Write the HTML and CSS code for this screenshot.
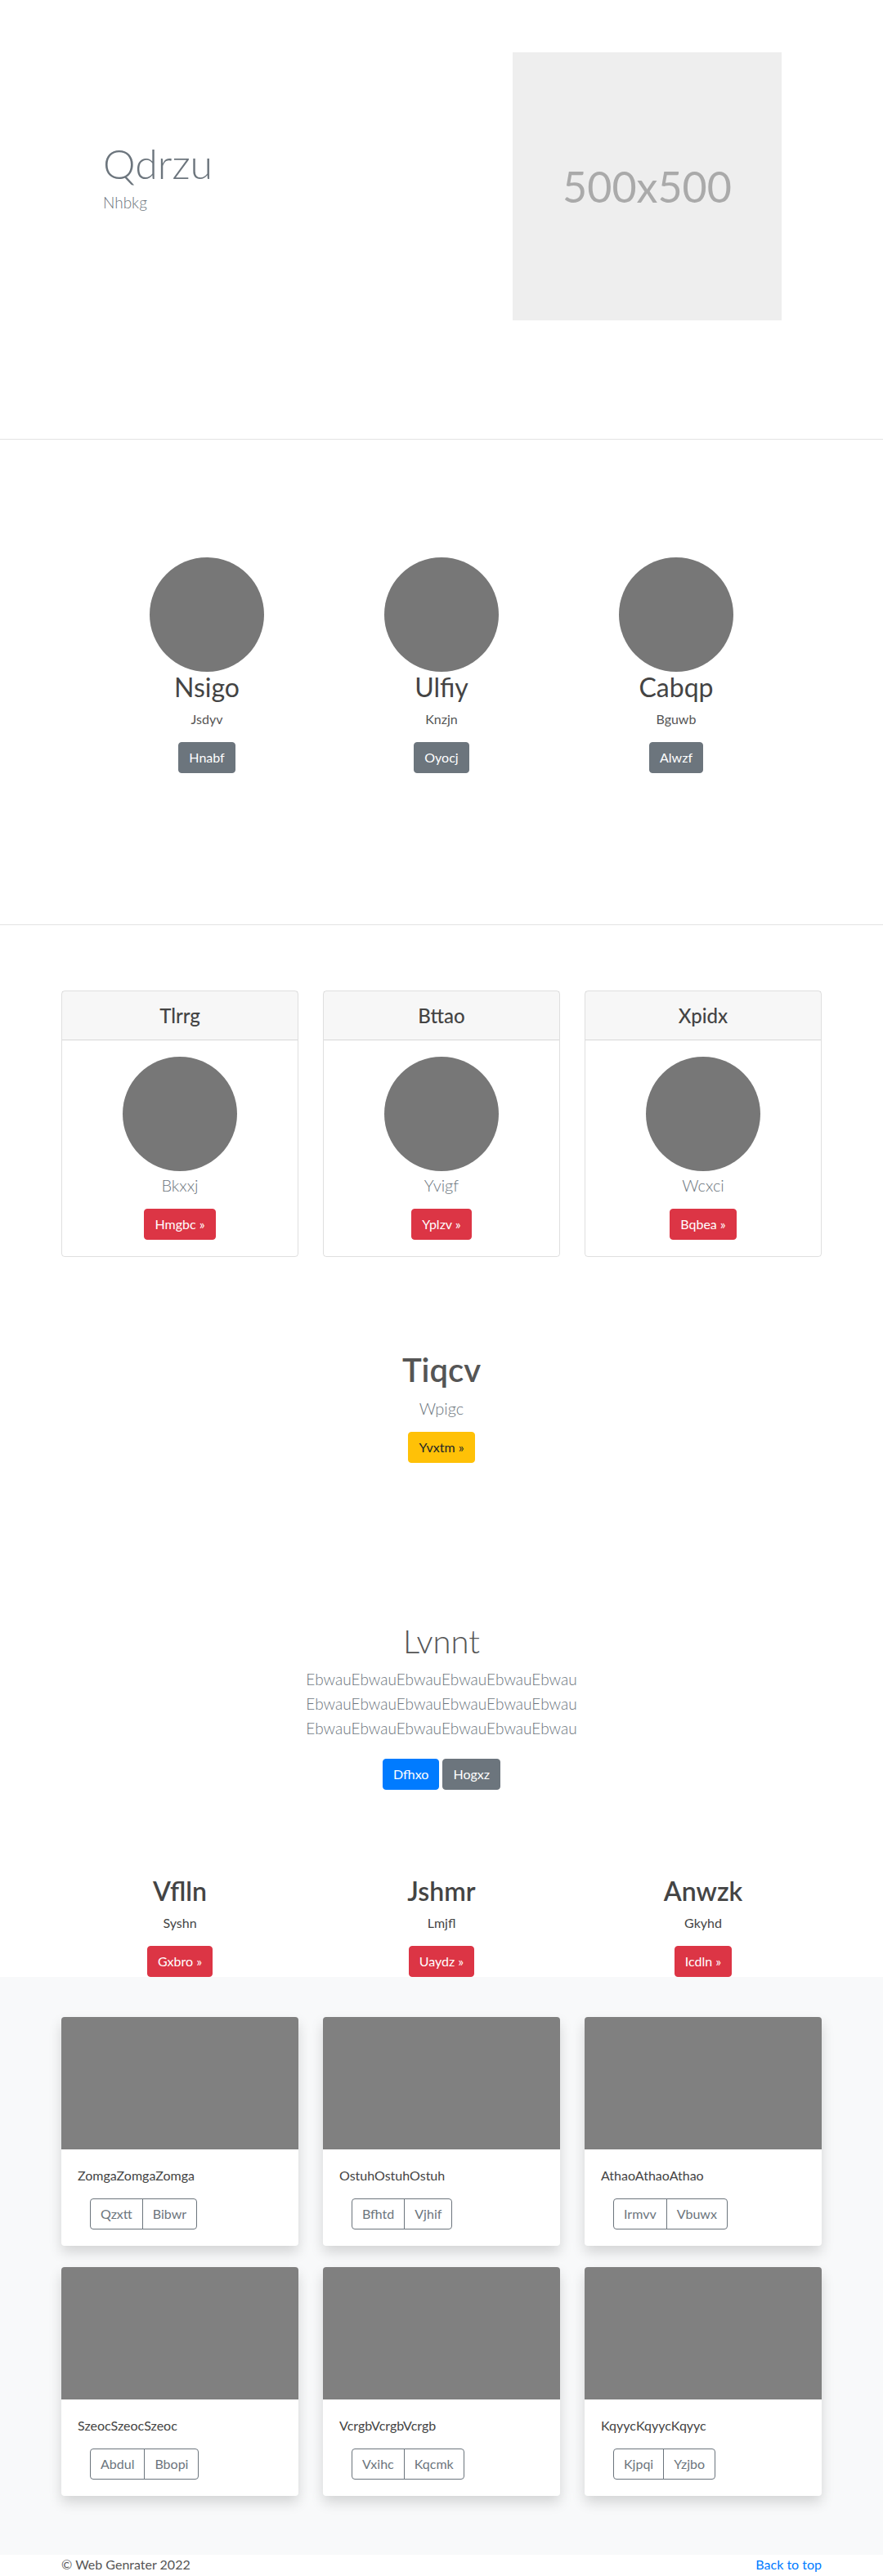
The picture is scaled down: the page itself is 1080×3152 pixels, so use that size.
FILE: index.html
```html
<!DOCTYPE html>
<html lang="en">
<head>
<meta charset="utf-8">
<title>Web Genrater</title>
<link rel="stylesheet" href="styles.css">
</head>
<body>
<section class="hero">
  <div class="container hero-row">
    <div class="hero-text">
      <h1 class="hero-title">Qdrzu</h1>
      <p class="hero-lead">Nhbkg</p>
    </div>
    <div class="hero-media">
      <div class="placeholder">500x500</div>
    </div>
  </div>
</section>
<div class="divider"></div>
<section class="team">
  <div class="team-grid">
    <div class="member">
      <div class="avatar"></div>
      <h2 class="member-name">Nsigo</h2>
      <p class="member-role">Jsdyv</p>
      <a class="btn btn-secondary" href="#">Hnabf</a>
    </div>
    <div class="member">
      <div class="avatar"></div>
      <h2 class="member-name">Ulfiy</h2>
      <p class="member-role">Knzjn</p>
      <a class="btn btn-secondary" href="#">Oyocj</a>
    </div>
    <div class="member">
      <div class="avatar"></div>
      <h2 class="member-name">Cabqp</h2>
      <p class="member-role">Bguwb</p>
      <a class="btn btn-secondary" href="#">Alwzf</a>
    </div>
  </div>
</section>
<div class="divider"></div>
<section class="pricing">
  <div class="container grid-3">
    <div class="pcard">
      <div class="pcard-header"><h4 class="pcard-title">Tlrrg</h4></div>
      <div class="pcard-body">
        <div class="avatar"></div>
        <p class="pcard-sub">Bkxxj</p>
        <a class="btn btn-danger" href="#">Hmgbc &raquo;</a>
      </div>
    </div>
    <div class="pcard">
      <div class="pcard-header"><h4 class="pcard-title">Bttao</h4></div>
      <div class="pcard-body">
        <div class="avatar"></div>
        <p class="pcard-sub">Yvigf</p>
        <a class="btn btn-danger" href="#">Yplzv &raquo;</a>
      </div>
    </div>
    <div class="pcard">
      <div class="pcard-header"><h4 class="pcard-title">Xpidx</h4></div>
      <div class="pcard-body">
        <div class="avatar"></div>
        <p class="pcard-sub">Wcxci</p>
        <a class="btn btn-danger" href="#">Bqbea &raquo;</a>
      </div>
    </div>
  </div>
</section>
<section class="cta">
  <h2 class="cta-title">Tiqcv</h2>
  <p class="lead cta-lead">Wpigc</p>
  <a class="btn btn-warning" href="#">Yvxtm &raquo;</a>
</section>
<section class="jumbo">
  <h1 class="jumbo-title">Lvnnt</h1>
  <p class="lead jumbo-lead">EbwauEbwauEbwauEbwauEbwauEbwau EbwauEbwauEbwauEbwauEbwauEbwau EbwauEbwauEbwauEbwauEbwauEbwau</p>
  <p class="jumbo-actions">
    <a class="btn btn-primary" href="#">Dfhxo</a>
    <a class="btn btn-secondary" href="#">Hogxz</a>
  </p>
</section>
<section class="features">
  <div class="container grid-3">
    <div class="feature">
      <h2 class="feature-title">Vflln</h2>
      <p class="feature-text">Syshn</p>
      <a class="btn btn-danger" href="#">Gxbro &raquo;</a>
    </div>
    <div class="feature">
      <h2 class="feature-title">Jshmr</h2>
      <p class="feature-text">Lmjfl</p>
      <a class="btn btn-danger" href="#">Uaydz &raquo;</a>
    </div>
    <div class="feature">
      <h2 class="feature-title">Anwzk</h2>
      <p class="feature-text">Gkyhd</p>
      <a class="btn btn-danger" href="#">Icdln &raquo;</a>
    </div>
  </div>
</section>
<section class="album">
  <div class="container album-grid">
    <div class="acard">
      <div class="acard-img"></div>
      <div class="acard-body">
        <p class="acard-text">ZomgaZomgaZomga</p>
        <div class="btn-group"><a class="btn btn-outline" href="#">Qzxtt</a><a class="btn btn-outline" href="#">Bibwr</a></div>
      </div>
    </div>
    <div class="acard">
      <div class="acard-img"></div>
      <div class="acard-body">
        <p class="acard-text">OstuhOstuhOstuh</p>
        <div class="btn-group"><a class="btn btn-outline" href="#">Bfhtd</a><a class="btn btn-outline" href="#">Vjhif</a></div>
      </div>
    </div>
    <div class="acard">
      <div class="acard-img"></div>
      <div class="acard-body">
        <p class="acard-text">AthaoAthaoAthao</p>
        <div class="btn-group"><a class="btn btn-outline" href="#">Irmvv</a><a class="btn btn-outline" href="#">Vbuwx</a></div>
      </div>
    </div>
    <div class="acard">
      <div class="acard-img"></div>
      <div class="acard-body">
        <p class="acard-text">SzeocSzeocSzeoc</p>
        <div class="btn-group"><a class="btn btn-outline" href="#">Abdul</a><a class="btn btn-outline" href="#">Bbopi</a></div>
      </div>
    </div>
    <div class="acard">
      <div class="acard-img"></div>
      <div class="acard-body">
        <p class="acard-text">VcrgbVcrgbVcrgb</p>
        <div class="btn-group"><a class="btn btn-outline" href="#">Vxihc</a><a class="btn btn-outline" href="#">Kqcmk</a></div>
      </div>
    </div>
    <div class="acard">
      <div class="acard-img"></div>
      <div class="acard-body">
        <p class="acard-text">KqyycKqyycKqyyc</p>
        <div class="btn-group"><a class="btn btn-outline" href="#">Kjpqi</a><a class="btn btn-outline" href="#">Yzjbo</a></div>
      </div>
    </div>
  </div>
</section>
<footer class="container footer">
  <p class="footer-line"><a class="back-top" href="#">Back to top</a>&copy; Web Genrater 2022</p>
</footer>
</body>
</html>
```
FILE: styles.css
```css
* { box-sizing: border-box; }

body {
  margin: 0;
  font-family: Lato, "Open Sans", "DejaVu Sans", sans-serif;
  font-size: 16px;
  line-height: 1.5;
  color: #212529;
  background: #fff;
}

.container {
  width: 960px;
  margin: 0 auto;
  padding: 0 15px;
}

/* buttons */
.btn {
  display: inline-block;
  font-family: inherit;
  font-size: 16px;
  font-weight: 400;
  line-height: 24px;
  padding: 6px 12px;
  border: 1px solid transparent;
  border-radius: 4px;
  text-decoration: none;
  vertical-align: middle;
  color: #fff;
}
.btn-secondary { background: #6c757d; border-color: #6c757d; }
.btn-danger { background: #dc3545; border-color: #dc3545; }
.btn-primary { background: #007bff; border-color: #007bff; }
.btn-warning { background: #ffc107; border-color: #ffc107; color: #212529; }
.btn-outline { background: transparent; border-color: #6c757d; color: #6c757d; }

.avatar {
  width: 140px;
  height: 140px;
  border-radius: 50%;
  background: #777;
  margin: 0 auto;
}

/* hero */
.hero { padding: 64px 0 145px; }
.hero-row { display: flex; align-items: flex-start; }
.hero-text { flex: 0 0 480px; padding: 106px 0 0 51px; }
.hero-title {
  margin: 0;
  font-size: 50px;
  font-weight: 300;
  line-height: 60px;
  color: #6c757d;
}
.hero-lead {
  margin: 4px 0 0;
  font-size: 19px;
  font-weight: 300;
  line-height: 28px;
  color: #6c757d;
}
.hero-media { padding-left: 72px; }
.placeholder {
  width: 329px;
  height: 328px;
  background: #eee;
  color: #aaa;
  font-size: 52px;
  display: flex;
  align-items: center;
  justify-content: center;
}

.divider { height: 1px; background: #e3e3e3; }

/* team */
.team { padding: 144px 0 185px; }
.team-grid {
  width: 861px;
  margin: 0 auto;
  display: grid;
  grid-template-columns: repeat(3, 1fr);
  text-align: center;
}
.member-name {
  margin: 0 0 8px;
  font-size: 32px;
  font-weight: 400;
  line-height: 38px;
  color: #444;
}
.member-role { margin: 0 0 16px; color: #555; }

/* pricing cards */
.pricing { padding-top: 80px; }
.grid-3 {
  display: grid;
  grid-template-columns: repeat(3, 1fr);
  column-gap: 30px;
}
.pcard {
  border: 1px solid rgba(0, 0, 0, .125);
  border-radius: 4px;
  text-align: center;
}
.pcard-header {
  background: rgba(0, 0, 0, .03);
  border-bottom: 1px solid rgba(0, 0, 0, .125);
  padding: 15px 20px;
}
.pcard-title {
  margin: 0;
  font-size: 24px;
  font-weight: 500;
  line-height: 29px;
  color: #444;
}
.pcard-body { padding: 20px; }
.pcard-sub {
  margin: 2px 0 14px;
  font-size: 20px;
  font-weight: 300;
  line-height: 30px;
  color: #6c757d;
}

/* call to action */
.cta { margin-top: 114px; text-align: center; }
.cta-title {
  margin: 0 0 8px;
  font-size: 40px;
  font-weight: 600;
  line-height: 48px;
  color: #555;
}
.lead {
  font-size: 20px;
  font-weight: 300;
  line-height: 30px;
  color: #6c757d;
}
.cta-lead { margin: 0 0 14px; }

/* jumbotron */
.jumbo { margin-top: 194px; text-align: center; }
.jumbo-title {
  margin: 0 0 8px;
  font-size: 40px;
  font-weight: 300;
  line-height: 48px;
  color: #555;
}
.jumbo-lead { max-width: 450px; margin: 0 auto 14px; font-size: 19px; }
.jumbo-actions { margin: 0; }
.jumbo-actions .btn { margin: 8px 0; }

/* features */
.features { margin-top: 97px; text-align: center; }
.feature-title {
  margin: 0 0 8px;
  font-size: 32px;
  font-weight: 600;
  line-height: 38px;
  color: #444;
}
.feature-text { margin: 0 0 16px; color: #444; }

/* album */
.album { background: #f8f9fa; padding: 49px 0 72px; }
.album-grid {
  display: grid;
  grid-template-columns: repeat(3, 1fr);
  gap: 26px 30px;
}
.acard {
  background: #fff;
  border-radius: 4px;
  overflow: hidden;
  box-shadow: 0 8px 16px rgba(0, 0, 0, .15);
}
.acard-img { height: 162px; background: #808080; }
.acard-body { padding: 20px; }
.acard-text { margin: 0 0 16px; color: #444; }
.btn-group { display: inline-flex; margin-left: 15px; }
.btn-group .btn:first-child { border-top-right-radius: 0; border-bottom-right-radius: 0; }
.btn-group .btn + .btn { margin-left: -1px; border-top-left-radius: 0; border-bottom-left-radius: 0; }

/* footer */
.footer-line { margin: 0 0 16px; color: #555; }
.back-top { float: right; color: #007bff; text-decoration: none; }
```
